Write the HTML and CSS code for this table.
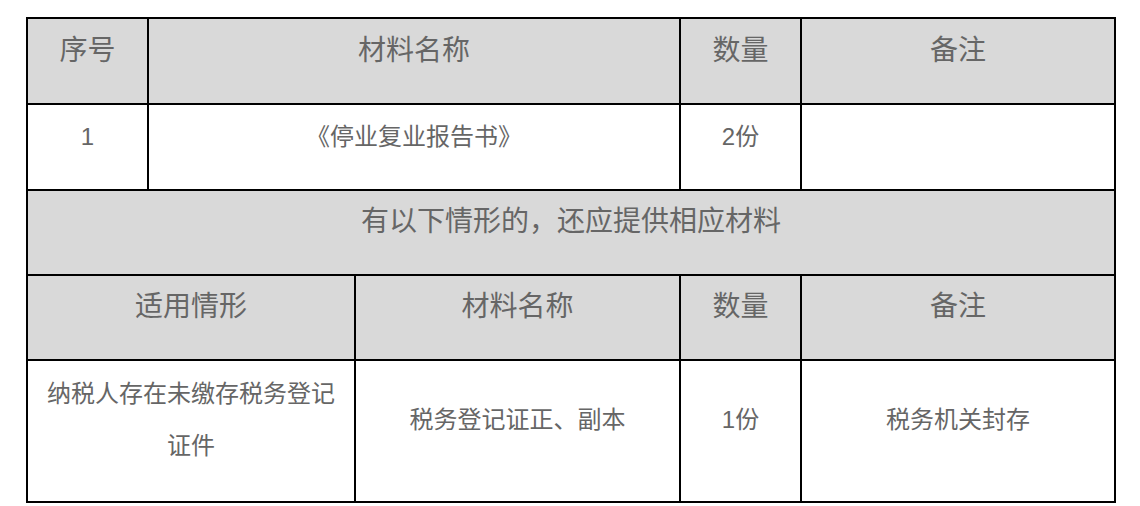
FILE: index.html
```html
<!DOCTYPE html>
<html lang="zh-CN">
<head>
<meta charset="utf-8">
<title>材料清单</title>
<link rel="stylesheet" href="styles.css">
</head>
<body>
<div class="page">
  <table class="materials">
    <colgroup>
      <col class="c1"><col class="c2"><col class="c3"><col class="c4"><col class="c5">
    </colgroup>
    <tr class="head first">
      <td><p>序号</p></td>
      <td colspan="2"><p>材料名称</p></td>
      <td><p>数量</p></td>
      <td><p>备注</p></td>
    </tr>
    <tr class="body first">
      <td><p>1</p></td>
      <td colspan="2"><p>《停业复业报告书》</p></td>
      <td><p>2份</p></td>
      <td><p></p></td>
    </tr>
    <tr class="head">
      <td colspan="5"><p>有以下情形的，还应提供相应材料</p></td>
    </tr>
    <tr class="head">
      <td colspan="2"><p>适用情形</p></td>
      <td><p>材料名称</p></td>
      <td><p>数量</p></td>
      <td><p>备注</p></td>
    </tr>
    <tr class="body tall">
      <td colspan="2"><p>纳税人存在未缴存税务登记证件</p></td>
      <td><p>税务登记证正、副本</p></td>
      <td><p>1份</p></td>
      <td><p>税务机关封存</p></td>
    </tr>
  </table>
</div>
</body>
</html>
```

FILE: styles.css
```css
html, body {
  margin: 0;
  padding: 0;
  background: #ffffff;
}

.page {
  padding: 17px 0 0 26px;
}

.materials {
  width: 1088px;
  table-layout: fixed;
  border-collapse: collapse;
  font-family: "Liberation Sans", "Noto Sans CJK SC", sans-serif;
  color: #666666;
}

.c1 { width: 121px; }
.c2 { width: 207px; }
.c3 { width: 325px; }
.c4 { width: 121px; }
.c5 { width: 314px; }

.materials td {
  border: 2px solid #000000;
  padding: 5px 8px;
  text-align: center;
  vertical-align: middle;
}

.materials p {
  margin: 0 0 21px;
  line-height: 52px;
  min-height: 52px;
}

.head td {
  background: #d9d9d9;
  font-size: 28px;
}

.body td {
  background: #ffffff;
  font-size: 24px;
}

.first td {
  padding-top: 6px;
}

.tall td {
  padding-top: 7px;
  padding-bottom: 8px;
}
```
